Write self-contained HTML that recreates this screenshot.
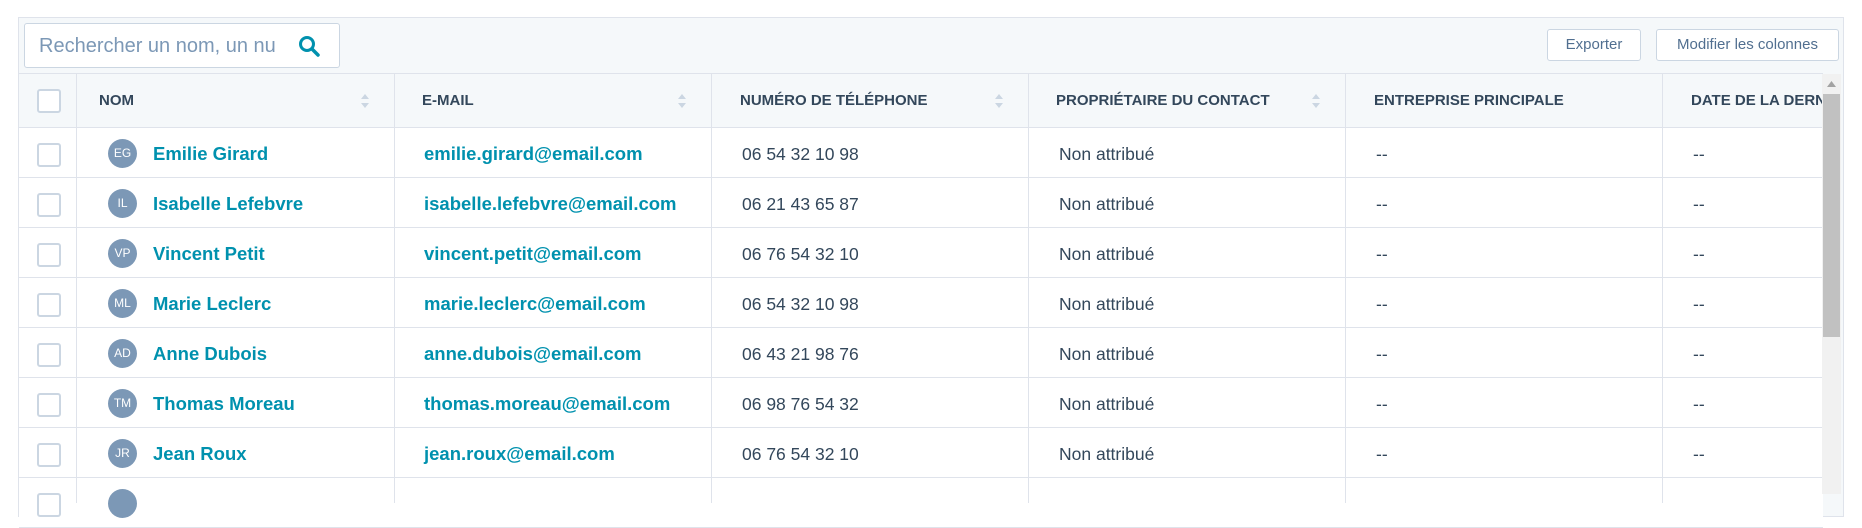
<!DOCTYPE html>
<html><head><meta charset="utf-8"><style>
*{box-sizing:border-box;margin:0;padding:0}
body{width:1862px;height:494px;background:#fff;font-family:"Liberation Sans",sans-serif;position:relative;overflow:hidden;color:#33475b}
.abs{position:absolute}
.wrap{left:18px;top:17px;width:1826px;height:500px;border:1px solid #dfe3eb;background:#f5f8fa}
.search{left:24px;top:23px;width:316px;height:45px;border:1px solid #cbd6e2;border-radius:3px;background:#fff;font-size:20px;color:#7c98b6;padding:11px 14px;white-space:nowrap;overflow:hidden}
.btn{top:29px;height:32px;border:1px solid #cbd6e2;border-radius:3px;background:#fff;font-size:15px;color:#516f90;text-align:center;line-height:30px}
.hdr{left:19px;top:73px;width:1804px;height:55px;background:#f5f8fa;border-top:1px solid #dfe3eb;border-bottom:1px solid #dfe3eb}
.th{top:73px;height:55px;line-height:55px;font-size:15px;font-weight:bold;color:#33475b;white-space:nowrap}
.row{left:19px;width:1804px;height:50px;background:#fff;border-bottom:1px solid #dfe3eb}
.vl{top:73px;width:1px;height:430px;background:#dfe3eb}
.cb{width:24px;height:24px;border:2px solid #cbd6e2;border-radius:3px;background:#fff;left:37px}
.av{left:108px;width:29px;height:29px;border-radius:50%;background:#7c98b6;color:#fff;font-size:12px;text-align:center;line-height:29px}
.nm{left:153px;font-size:18.5px;font-weight:bold;color:#0091ae;line-height:20px}
.em{left:424px;font-size:18.5px;color:#0091ae;font-weight:bold;line-height:20px}
.tx{font-size:17.5px;line-height:20px;color:#33475b}
.sort{width:8px;height:14px}
</style></head><body>
<div class="abs wrap"></div>
<div class="abs search">Rechercher un nom, un nu</div>
<svg class="abs" style="left:297px;top:34px" width="24" height="24" viewBox="0 0 24 24"><circle cx="10" cy="10" r="6.5" fill="none" stroke="#0091ae" stroke-width="3"/><line x1="15" y1="15" x2="21" y2="21" stroke="#0091ae" stroke-width="3.5" stroke-linecap="round"/></svg>
<div class="abs btn" style="left:1547px;width:94px">Exporter</div>
<div class="abs btn" style="left:1656px;width:183px">Modifier les colonnes</div>
<div class="abs hdr"></div>
<div class="abs row" style="top:128px"></div>
<div class="abs row" style="top:178px"></div>
<div class="abs row" style="top:228px"></div>
<div class="abs row" style="top:278px"></div>
<div class="abs row" style="top:328px"></div>
<div class="abs row" style="top:378px"></div>
<div class="abs row" style="top:428px"></div>
<div class="abs row" style="top:478px"></div>
<div class="abs vl" style="left:76px"></div>
<div class="abs vl" style="left:394px"></div>
<div class="abs vl" style="left:711px"></div>
<div class="abs vl" style="left:1028px"></div>
<div class="abs vl" style="left:1345px"></div>
<div class="abs vl" style="left:1662px"></div>
<div class="abs cb" style="top:89px"></div>
<div class="abs th" style="left:99px">NOM</div>
<div class="abs th" style="left:422px">E-MAIL</div>
<div class="abs th" style="left:740px">NUMÉRO DE TÉLÉPHONE</div>
<div class="abs th" style="left:1056px">PROPRIÉTAIRE DU CONTACT</div>
<div class="abs th" style="left:1374px">ENTREPRISE PRINCIPALE</div>
<div class="abs th" style="left:1691px">DATE DE LA DERN</div>
<svg class="abs sort" style="left:361px;top:94px" viewBox="0 0 8 14"><path d="M4 0L8 5H0Z M4 14L8 9H0Z" fill="#cbd6e2"/></svg>
<svg class="abs sort" style="left:678px;top:94px" viewBox="0 0 8 14"><path d="M4 0L8 5H0Z M4 14L8 9H0Z" fill="#cbd6e2"/></svg>
<svg class="abs sort" style="left:995px;top:94px" viewBox="0 0 8 14"><path d="M4 0L8 5H0Z M4 14L8 9H0Z" fill="#cbd6e2"/></svg>
<svg class="abs sort" style="left:1312px;top:94px" viewBox="0 0 8 14"><path d="M4 0L8 5H0Z M4 14L8 9H0Z" fill="#cbd6e2"/></svg>

<div class="abs cb" style="top:143px"></div><div class="abs av" style="top:139px">EG</div><div class="abs nm" style="top:144px">Emilie Girard</div><div class="abs em" style="top:144px">emilie.girard@email.com</div><div class="abs tx" style="left:742px;top:144px">06 54 32 10 98</div><div class="abs tx" style="left:1059px;top:144px">Non attribué</div><div class="abs tx" style="left:1376px;top:144px">--</div><div class="abs tx" style="left:1693px;top:144px">--</div>
<div class="abs cb" style="top:193px"></div><div class="abs av" style="top:189px">IL</div><div class="abs nm" style="top:194px">Isabelle Lefebvre</div><div class="abs em" style="top:194px">isabelle.lefebvre@email.com</div><div class="abs tx" style="left:742px;top:194px">06 21 43 65 87</div><div class="abs tx" style="left:1059px;top:194px">Non attribué</div><div class="abs tx" style="left:1376px;top:194px">--</div><div class="abs tx" style="left:1693px;top:194px">--</div>
<div class="abs cb" style="top:243px"></div><div class="abs av" style="top:239px">VP</div><div class="abs nm" style="top:244px">Vincent Petit</div><div class="abs em" style="top:244px">vincent.petit@email.com</div><div class="abs tx" style="left:742px;top:244px">06 76 54 32 10</div><div class="abs tx" style="left:1059px;top:244px">Non attribué</div><div class="abs tx" style="left:1376px;top:244px">--</div><div class="abs tx" style="left:1693px;top:244px">--</div>
<div class="abs cb" style="top:293px"></div><div class="abs av" style="top:289px">ML</div><div class="abs nm" style="top:294px">Marie Leclerc</div><div class="abs em" style="top:294px">marie.leclerc@email.com</div><div class="abs tx" style="left:742px;top:294px">06 54 32 10 98</div><div class="abs tx" style="left:1059px;top:294px">Non attribué</div><div class="abs tx" style="left:1376px;top:294px">--</div><div class="abs tx" style="left:1693px;top:294px">--</div>
<div class="abs cb" style="top:343px"></div><div class="abs av" style="top:339px">AD</div><div class="abs nm" style="top:344px">Anne Dubois</div><div class="abs em" style="top:344px">anne.dubois@email.com</div><div class="abs tx" style="left:742px;top:344px">06 43 21 98 76</div><div class="abs tx" style="left:1059px;top:344px">Non attribué</div><div class="abs tx" style="left:1376px;top:344px">--</div><div class="abs tx" style="left:1693px;top:344px">--</div>
<div class="abs cb" style="top:393px"></div><div class="abs av" style="top:389px">TM</div><div class="abs nm" style="top:394px">Thomas Moreau</div><div class="abs em" style="top:394px">thomas.moreau@email.com</div><div class="abs tx" style="left:742px;top:394px">06 98 76 54 32</div><div class="abs tx" style="left:1059px;top:394px">Non attribué</div><div class="abs tx" style="left:1376px;top:394px">--</div><div class="abs tx" style="left:1693px;top:394px">--</div>
<div class="abs cb" style="top:443px"></div><div class="abs av" style="top:439px">JR</div><div class="abs nm" style="top:444px">Jean Roux</div><div class="abs em" style="top:444px">jean.roux@email.com</div><div class="abs tx" style="left:742px;top:444px">06 76 54 32 10</div><div class="abs tx" style="left:1059px;top:444px">Non attribué</div><div class="abs tx" style="left:1376px;top:444px">--</div><div class="abs tx" style="left:1693px;top:444px">--</div>
<div class="abs cb" style="top:493px"></div><div class="abs av" style="top:489px"></div>

<div class="abs" style="left:1822px;top:74px;width:19px;height:420px;background:#f1f1f1"></div>
<svg class="abs" style="left:1826px;top:80px" width="11" height="8" viewBox="0 0 11 8"><path d="M5.5 1L10 7H1Z" fill="#a3a3a3"/></svg>
<div class="abs" style="left:1823px;top:94px;width:17px;height:243px;background:#c1c1c1"></div>
</body></html>
